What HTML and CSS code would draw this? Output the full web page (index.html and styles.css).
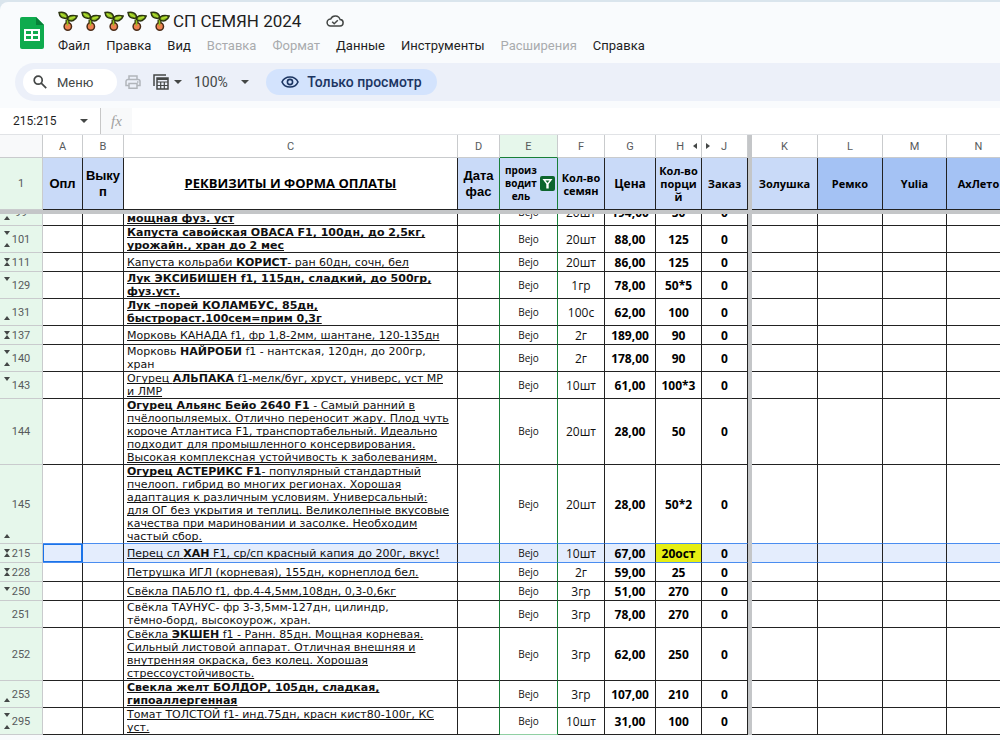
FILE: index.html
```
<!DOCTYPE html>
<html lang="ru">
  <head>
    <meta charset="utf-8" />
    <title>СП СЕМЯН 2024</title>
    <link rel="stylesheet" href="styles.css">
  </head>
  <body>
    <!-- Shared icons -->
    <svg class="defs" width="0" height="0">
      <symbol id="sprout" viewBox="0 0 20 20">
        <path d="M9.500 8.500V14" fill="none" stroke="#2c3411" stroke-width="4" />
        <circle cx="9.800" cy="15.500" r="3.700" fill="#ee8250" stroke="#4a2c18" stroke-width="1.500" />
        <path d="M9.500 8v6.500" fill="none" stroke="#8fc31b" stroke-width="1.600" />
        <path d="M1 1.500c4-.8 8 0 8.800 5.200C3.500 8.500 1.500 5.500 1 1.500z" fill="#86b81c" stroke="#2c3411" stroke-width="1.500" />
        <path d="M9.500 8.500C9.800 4.500 14 3.800 19.200 5c-1.600 4.600-5.700 6.400-9.700 3.500z" fill="#86b81c" stroke="#2c3411" stroke-width="1.500" />
        <path d="M3 3l5 3M11.500 7.500L17 6" fill="none" stroke="#b5dc35" stroke-width="1.400" />
      </symbol>
      <symbol id="caret" viewBox="0 0 8 4"><path d="M0 0h8L4 4z" /></symbol>
    </svg>

    <div class="app">
      <header class="top">
        <svg class="logo" viewBox="0 0 24 32">
          <path d="M2 0h14l8 8v22a2 2 0 0 1-2 2H2a2 2 0 0 1-2-2V2a2 2 0 0 1 2-2z" fill="#0fab4e" />
          <path d="M16 0l8 8h-8z" fill="#078038" />
          <path d="M4 12h16v12H4zM6 14v3h5v-3zM13 14v3h5v-3zM6 19v3h5v-3zM13 19v3h5v-3z" fill="#fff" fill-rule="evenodd" />
        </svg>
        <div class="heading">
          <div class="title">
            <svg class="sprout"><use href="#sprout" /></svg>
            <svg class="sprout"><use href="#sprout" /></svg>
            <svg class="sprout"><use href="#sprout" /></svg>
            <svg class="sprout"><use href="#sprout" /></svg>
            <svg class="sprout"><use href="#sprout" /></svg>
            <h1>СП СЕМЯН 2024</h1>
            <svg class="cloud" viewBox="0 0 18 12" fill="none" stroke="#444746" stroke-width="1.500">
              <path d="M4.500 11h9.200a3.200 3.200 0 0 0 .4-6.400A5 5 0 0 0 4.700 4a3.500 3.500 0 0 0-.2 7z" />
              <path d="M6.200 6.800l2 2 3.600-3.600" />
            </svg>
          </div>
          <nav class="menu">
            <button>Файл</button>
            <button>Правка</button>
            <button>Вид</button>
            <button disabled>Вставка</button>
            <button disabled>Формат</button>
            <button>Данные</button>
            <button>Инструменты</button>
            <button disabled>Расширения</button>
            <button>Справка</button>
          </nav>
        </div>
      </header>

      <div class="toolbar">
        <button class="search">
          <svg width="14" height="14" viewBox="0 0 14 14" fill="none" stroke="#444746" stroke-width="1.700"><circle cx="5.200" cy="5.200" r="4" /><path d="M8.200 8.200l5 5" /></svg>
          Меню
        </button>
        <button class="tool" aria-label="Печать">
          <svg width="16" height="14" viewBox="0 0 16 14" fill="none" stroke="#b1b5bb" stroke-width="1.500"><path d="M4 4V1h8v3M4 10.500H1V6.500A2 2 0 0 1 3 4.500h10a2 2 0 0 1 2 2v4h-3M4 8.500h8v4.700H4z" /><path d="M12 7h1.500" /></svg>
        </button>
        <button class="tool" aria-label="Фильтры">
          <svg width="16" height="16" viewBox="0 0 16 16" fill="none" stroke="#444746" stroke-width="1.500"><path d="M1 12V1h12" /><path d="M4 4h11v11H4z" /><path d="M4 5h11" stroke-width="2" /><path d="M4 8h11M4 11.500h11M7.700 8v7M11.300 8v7" stroke-width="1.200" /></svg>
          <svg class="caret"><use href="#caret" /></svg>
        </button>
        <button class="tool zoom">100% <svg class="caret"><use href="#caret" /></svg></button>
        <button class="view-only">
          <svg width="18" height="12" viewBox="0 0 18 12" fill="none" stroke="#1c3562" stroke-width="1.600"><path d="M1 6c3-6.700 13-6.700 16 0-3 6.700-13 6.700-16 0z" /><circle cx="9" cy="6" r="2.600" /></svg>
          Только просмотр
        </button>
      </div>

      <div class="formula-bar">
        <button class="name-box">215:215 <svg class="caret"><use href="#caret" /></svg></button>
        <label class="fx" for="formula">fx</label>
        <input id="formula" type="text" readonly />
      </div>

      <div class="sheet">
        <!-- Frozen part -->
        <table class="grid frozen">
          <colgroup>
            <col class="c-num"><col class="c-a"><col class="c-b"><col class="c-c"><col class="c-d"><col class="c-e"><col class="c-f"><col class="c-g"><col class="c-h"><col class="c-j"><col class="c-bar"><col class="c-k"><col class="c-l"><col class="c-m"><col>
          </colgroup>
          <tr class="letters">
            <th class="corner"></th><th>A</th><th>B</th><th>C</th><th>D</th><th class="on">E</th><th>F</th><th>G</th>
            <th><span class="hidden-next">H<i class="left"></i></span></th><th><span class="hidden-prev"><i class="right"></i>J</span></th>
            <th class="bar"></th><th>K</th><th>L</th><th>M</th><th>N</th>
          </tr>
          <tr class="names">
            <th class="num">1</th>
            <th class="arial">Опл</th>
            <th class="arial">Выку<br>п</th>
            <th class="pay"><a href="#">РЕКВИЗИТЫ И ФОРМА ОПЛАТЫ</a></th>
            <th class="big">Дата<br>фас</th>
            <th class="maker"><div><span>произ<br>водит<br>ель</span>
              <button aria-label="Фильтр"><svg width="15" height="15" viewBox="0 0 15 15"><path d="M2.500 3h10L8.700 8v4.500H6.300V8z" fill="#fff" /><path d="M5.500 4.500h4l-2 2.500z" fill="#0d652d" /></svg></button></div></th>
            <th>Кол-во<br>семян</th>
            <th class="mid">Цена</th>
            <th>Кол-во<br>порци<br>й</th>
            <th>Заказ</th>
            <th class="bar"></th>
            <th>Золушка</th>
            <th class="deep">Ремко</th>
            <th class="deep">Yulia</th>
            <th class="deep">АхЛето</th>
          </tr>
        </table>

        <div class="scroll">
          <table class="grid rows">
            <colgroup>
              <col class="c-num"><col class="c-a"><col class="c-b"><col class="c-c"><col class="c-d"><col class="c-e"><col class="c-f"><col class="c-g"><col class="c-h"><col class="c-j"><col class="c-bar"><col class="c-k"><col class="c-l"><col class="c-m"><col>
            </colgroup>
            <tr>
              <th class="num up">99</th><td></td><td></td>
              <td class="text"><a href="#"><b><br>мощная фуз. уст</b></a></td>
              <td></td><td class="e">Bejo</td><td>20шт</td><td class="b">194,00</td><td class="b">50</td><td class="b">0</td><td class="bar"></td><td></td><td></td><td></td><td></td>
            </tr>
            <tr>
              <th class="num down up">101</th><td></td><td></td>
              <td class="text"><a href="#"><b>Капуста савойская ОВАСА F1, 100дн, до 2,5кг,<br>урожайн., хран до 2 мес</b></a></td>
              <td></td><td class="e">Bejo</td><td>20шт</td><td class="b">88,00</td><td class="b">125</td><td class="b">0</td><td class="bar"></td><td></td><td></td><td></td><td></td>
            </tr>
            <tr>
              <th class="num both">111</th><td></td><td></td>
              <td class="text"><a href="#">Капуста кольраби <b>КОРИСТ</b>- ран 60дн, сочн, бел</a></td>
              <td></td><td class="e">Bejo</td><td>20шт</td><td class="b">86,00</td><td class="b">125</td><td class="b">0</td><td class="bar"></td><td></td><td></td><td></td><td></td>
            </tr>
            <tr>
              <th class="num down">129</th><td></td><td></td>
              <td class="text"><a href="#"><b>Лук ЭКСИБИШЕН f1, 115дн, сладкий, до 500гр,<br>фуз.уст.</b></a></td>
              <td></td><td class="e">Bejo</td><td>1гр</td><td class="b">78,00</td><td class="b">50*5</td><td class="b">0</td><td class="bar"></td><td></td><td></td><td></td><td></td>
            </tr>
            <tr>
              <th class="num up">131</th><td></td><td></td>
              <td class="text"><a href="#"><b>Лук –порей КОЛАМБУС, 85дн,<br>быстрораст.100сем=прим 0,3г</b></a></td>
              <td></td><td class="e">Bejo</td><td>100с</td><td class="b">62,00</td><td class="b">100</td><td class="b">0</td><td class="bar"></td><td></td><td></td><td></td><td></td>
            </tr>
            <tr>
              <th class="num both">137</th><td></td><td></td>
              <td class="text"><a href="#">Морковь КАНАДА f1, фр 1,8-2мм, шантане, 120-135дн</a></td>
              <td></td><td class="e">Bejo</td><td>2г</td><td class="b">189,00</td><td class="b">90</td><td class="b">0</td><td class="bar"></td><td></td><td></td><td></td><td></td>
            </tr>
            <tr>
              <th class="num down up">140</th><td></td><td></td>
              <td class="text">Морковь <b>НАЙРОБИ</b> f1 - нантская, 120дн, до 200гр,<br>хран</td>
              <td></td><td class="e">Bejo</td><td>2г</td><td class="b">178,00</td><td class="b">90</td><td class="b">0</td><td class="bar"></td><td></td><td></td><td></td><td></td>
            </tr>
            <tr>
              <th class="num down">143</th><td></td><td></td>
              <td class="text"><a href="#">Огурец <b>АЛЬПАКА</b> f1-мелк/буг, хруст, универс, уст МР<br>и ЛМР</a></td>
              <td></td><td class="e">Bejo</td><td>10шт</td><td class="b">61,00</td><td class="b">100*3</td><td class="b">0</td><td class="bar"></td><td></td><td></td><td></td><td></td>
            </tr>
            <tr>
              <th class="num">144</th><td></td><td></td>
              <td class="text"><a href="#"><b>Огурец Альянс Бейо 2640 F1</b> - Самый ранний в<br>пчёлоопыляемых. Отлично переносит жару. Плод чуть<br>короче Атлантиса F1, транспортабельный. Идеально<br>подходит для промышленного консервирования.<br>Высокая комплексная устойчивость к заболеваниям.</a></td>
              <td></td><td class="e">Bejo</td><td>20шт</td><td class="b">28,00</td><td class="b">50</td><td class="b">0</td><td class="bar"></td><td></td><td></td><td></td><td></td>
            </tr>
            <tr class="before-selected">
              <th class="num up">145</th><td></td><td></td>
              <td class="text"><a href="#"><b>Огурец АСТЕРИКС F1</b>- популярный стандартный<br>пчелооп. гибрид во многих регионах. Хорошая<br>адаптация к различным условиям. Универсальный:<br>для ОГ без укрытия и теплиц. Великолепные вкусовые<br>качества при мариновании и засолке. Необходим<br>частый сбор.</a></td>
              <td></td><td class="e">Bejo</td><td>20шт</td><td class="b">28,00</td><td class="b">50*2</td><td class="b">0</td><td class="bar"></td><td></td><td></td><td></td><td></td>
            </tr>
            <tr class="selected">
              <th class="num both">215</th><td class="active"></td><td></td>
              <td class="text"><a href="#">Перец сл <b>ХАН</b> F1, ср/сп красный капия до 200г, вкус!</a></td>
              <td></td><td class="e">Bejo</td><td>10шт</td><td class="b">67,00</td><td class="b left-over">20ост</td><td class="b">0</td><td class="bar"></td><td></td><td></td><td></td><td></td>
            </tr>
            <tr>
              <th class="num both">228</th><td></td><td></td>
              <td class="text"><a href="#">Петрушка ИГЛ (корневая), 155дн, корнеплод бел.</a></td>
              <td></td><td class="e">Bejo</td><td>2г</td><td class="b">59,00</td><td class="b">25</td><td class="b">0</td><td class="bar"></td><td></td><td></td><td></td><td></td>
            </tr>
            <tr>
              <th class="num down">250</th><td></td><td></td>
              <td class="text"><a href="#">Свёкла ПАБЛО f1, фр.4-4,5мм,108дн, 0,3-0,6кг</a></td>
              <td></td><td class="e">Bejo</td><td>3гр</td><td class="b">51,00</td><td class="b">270</td><td class="b">0</td><td class="bar"></td><td></td><td></td><td></td><td></td>
            </tr>
            <tr>
              <th class="num">251</th><td></td><td></td>
              <td class="text">Свёкла ТАУНУС- фр 3-3,5мм-127дн, цилиндр,<br>тёмно-борд, высокоурож, хран.</td>
              <td></td><td class="e">Bejo</td><td>3гр</td><td class="b">78,00</td><td class="b">270</td><td class="b">0</td><td class="bar"></td><td></td><td></td><td></td><td></td>
            </tr>
            <tr>
              <th class="num">252</th><td></td><td></td>
              <td class="text"><a href="#">Свёкла <b>ЭКШЕН</b> f1 - Ранн. 85дн. Мощная корневая.<br>Сильный листовой аппарат. Отличная внешняя и<br>внутренняя окраска, без колец. Хорошая<br>стрессоустойчивость.</a></td>
              <td></td><td class="e">Bejo</td><td>3гр</td><td class="b">62,00</td><td class="b">250</td><td class="b">0</td><td class="bar"></td><td></td><td></td><td></td><td></td>
            </tr>
            <tr>
              <th class="num up">253</th><td></td><td></td>
              <td class="text"><a href="#"><b>Свекла желт БОЛДОР, 105дн, сладкая,<br>гипоаллергенная</b></a></td>
              <td></td><td class="e">Bejo</td><td>3гр</td><td class="b">107,00</td><td class="b">210</td><td class="b">0</td><td class="bar"></td><td></td><td></td><td></td><td></td>
            </tr>
            <tr>
              <th class="num down up">295</th><td></td><td></td>
              <td class="text"><a href="#">Томат ТОЛСТОЙ f1- инд.75дн, красн кист80-100г, КС<br>уст.</a></td>
              <td></td><td class="e">Bejo</td><td>10шт</td><td class="b">31,00</td><td class="b">100</td><td class="b">0</td><td class="bar"></td><td></td><td></td><td></td><td></td>
            </tr>
          </table>
        </div>
      </div>
    </div>
  </body>
</html>
```
FILE: styles.css
```
* {
  box-sizing: border-box;
}

body {
  margin: 0;
  background-color: #dae5ed;
  font-family: Roboto, "Liberation Sans", sans-serif;
  color: #1f1f1f;
  overflow: hidden;
}

button {
  border: none;
  padding: 0;
  background: none;
  font: inherit;
  color: inherit;
  cursor: pointer;
}

.defs {
  position: absolute;
}

.app {
  display: flex;
  flex-direction: column;
  min-height: calc(100vh - 2px);
  margin-top: 2px;
  border-top-left-radius: 8px;
  background-color: #f9fbfd;
  overflow: hidden;
}

/* Title and menu */
.top {
  display: flex;
  gap: 14px;
  height: 61px;
  padding: 8px 20px 0;
}

.logo {
  width: 24px;
  height: 32px;
  margin-top: 7px;
}

.title {
  display: flex;
  align-items: center;
  gap: 3px;
  height: 22px;
}

.sprout {
  width: 20px;
  height: 20px;
}

.title h1 {
  margin: 0;
  font-size: 17px;
  font-weight: 400;
  line-height: 22px;
}

.cloud {
  width: 18px;
  height: 12px;
  margin-left: 22px;
}

.menu {
  display: flex;
  gap: 16px;
  height: 26px;
  align-items: center;
  font-size: 13px;
}

.menu button:disabled {
  color: #a9abae;
}

/* Toolbar */
.toolbar {
  display: flex;
  align-items: center;
  height: 38px;
  margin-left: 15px;
  padding-left: 8px;
  border-radius: 19px 0 0 19px;
  background-color: #ecf0f9;
  color: #444746;
  font-size: 14px;
}

.search {
  display: flex;
  align-items: center;
  gap: 10px;
  width: 94px;
  height: 26px;
  padding-left: 10px;
  border-radius: 13px;
  background-color: #fff;
  font-size: 13px;
}

.tool {
  display: flex;
  align-items: center;
  gap: 5px;
  margin-left: 8px;
}

.tool + .tool {
  margin-left: 12px;
}

.zoom {
  gap: 13px;
}

.caret {
  width: 8px;
  height: 4px;
  fill: #444746;
}

.view-only {
  display: flex;
  align-items: center;
  justify-content: center;
  gap: 8px;
  width: 171px;
  height: 26px;
  margin-left: 17px;
  border-radius: 13px;
  background-color: #d3e3fd;
  color: #1c3562;
  font-weight: 500;
}

/* Formula bar */
.formula-bar {
  display: flex;
  height: 27px;
  margin-top: 7px;
  border-bottom: 1px solid #e1e3e6;
  background-color: #fff;
  font-size: 12px;
}

.name-box {
  display: flex;
  align-items: center;
  justify-content: space-between;
  width: 100px;
  padding: 0 12px 0 13px;
}

.fx {
  width: 32px;
  border-left: 1px solid #c7c7c7;
  background-color: #f8f9fa;
  color: #a0a0a0;
  font: italic 15px/26px "Liberation Serif", serif;
  text-align: center;
}

.formula-bar input {
  flex: 1;
  border: none;
  outline: none;
}

/* Grid */
.grid {
  width: 100%;
  min-width: 1011px;
  table-layout: fixed;
  border-collapse: separate;
  border-spacing: 0;
  background-color: #fff;
}

.c-num { width: 43px; }
.c-a { width: 40px; }
.c-b { width: 41px; }
.c-c { width: 334px; }
.c-d { width: 42px; }
.c-e { width: 58px; }
.c-f { width: 47px; }
.c-g { width: 51px; }
.c-h { width: 46px; }
.c-j { width: 46px; }
.c-bar { width: 4px; }
.c-k { width: 66px; }
.c-l { width: 65px; }
.c-m { width: 64px; }

.grid th,
.grid td {
  padding: 0;
  white-space: nowrap;
}

.grid a {
  color: inherit;
  text-decoration: underline;
  text-decoration-skip-ink: none;
}

.letters th {
  height: 23px;
  border-right: 1px solid #c9cbcd;
  border-bottom: 1px solid #c9cbcd;
  color: #575a5c;
  font-size: 11px;
  font-weight: 400;
}

.letters .corner {
  background-color: #f8f9fa;
}

.letters .on {
  background-color: #e6f7eb;
  border-bottom-color: #188038;
}

.hidden-next,
.hidden-prev {
  display: flex;
  align-items: center;
  justify-content: flex-end;
  gap: 9px;
  padding-right: 4px;
}

.hidden-prev {
  justify-content: flex-start;
  gap: 11px;
  padding: 0 0 0 4px;
}

.left,
.right {
  border: 3px solid transparent;
  border-right: 4px solid #444746;
  border-left: 0;
}

.right {
  border-right: 0;
  border-left: 4px solid #444746;
}

.names th {
  height: 52px;
  border-right: 1px solid #222;
  border-bottom: 1px solid #222;
  background-color: #c9daf8;
  color: #000;
  font: bold 11px/13px "Open Sans", sans-serif;
}

.names .arial,
.names .big {
  font: bold 13px/16px "Liberation Sans", sans-serif;
}

.names .pay {
  background-color: #fff;
  font-size: 13px;
}

.names .mid {
  font-size: 12px;
}

.names .maker {
  border-right-color: #188038;
  font: bold 10px/13px "Open Sans", sans-serif;
}

.names .big {
  border-right-color: #188038;
}

.maker div {
  display: flex;
  align-items: center;
  justify-content: space-between;
  padding: 0 2px 0 5px;
}

.maker button {
  width: 15px;
  height: 15px;
  border-radius: 2px;
  background-color: #0d652d;
}

.maker svg {
  display: block;
}

.names .deep {
  background-color: #a4c2f4;
}

.grid .num {
  border-right: 1px solid #c9cbcd;
  border-bottom: 1px solid #c9cbcd;
  background-color: #e6f7eb;
  color: #575a5c;
  font: 400 11px/13px Roboto, sans-serif;
}

.grid .bar {
  border: none;
  background-color: #c4c6c8;
}

.scroll {
  border-top: 4px solid #c4c6c8;
  overflow: hidden;
}

/* The list is scrolled a little, so its first row is cut off */
.rows {
  margin-top: -15px;
}

.rows tr {
  height: 19px;
}

.rows td {
  border-right: 1px solid #222;
  border-bottom: 1px solid #222;
  color: #111;
  font: 12px/13px "Open Sans", sans-serif;
  text-align: center;
}

.rows .text {
  padding-left: 3px;
  font: 11px/13px "DejaVu Sans", sans-serif;
  text-align: left;
}

.rows td:nth-child(5),
.rows .e {
  border-right-color: #188038;
}

.rows .e {
  font-size: 10px;
}

.rows .b {
  color: #000;
  font-weight: 700;
}

.rows tr:last-child .e {
  border-bottom-color: #8fcfa2;
}

.rows .before-selected td:not(.bar),
.rows .selected td:not(.bar) {
  border-bottom-color: #4a8df0;
}

.selected td:not(.bar) {
  background-color: #e4edfd;
}

.rows .selected .active {
  border-right-color: #1a73e8;
  box-shadow: inset 0 0 0 1px #1a73e8;
}

.rows .selected .left-over {
  background-color: #e6ee12;
}

/* Arrows beside the numbers where rows are hidden */
.rows .num {
  position: relative;
}

.down::before,
.up::after,
.both::before,
.both::after {
  content: "";
  position: absolute;
  left: 4px;
  border: 3px solid transparent;
}

.down::before,
.both::before {
  top: 5px;
  border-top: 4px solid #444746;
  border-bottom: 0;
}

.up::after,
.both::after {
  bottom: 5px;
  border-bottom: 4px solid #444746;
  border-top: 0;
}
```
